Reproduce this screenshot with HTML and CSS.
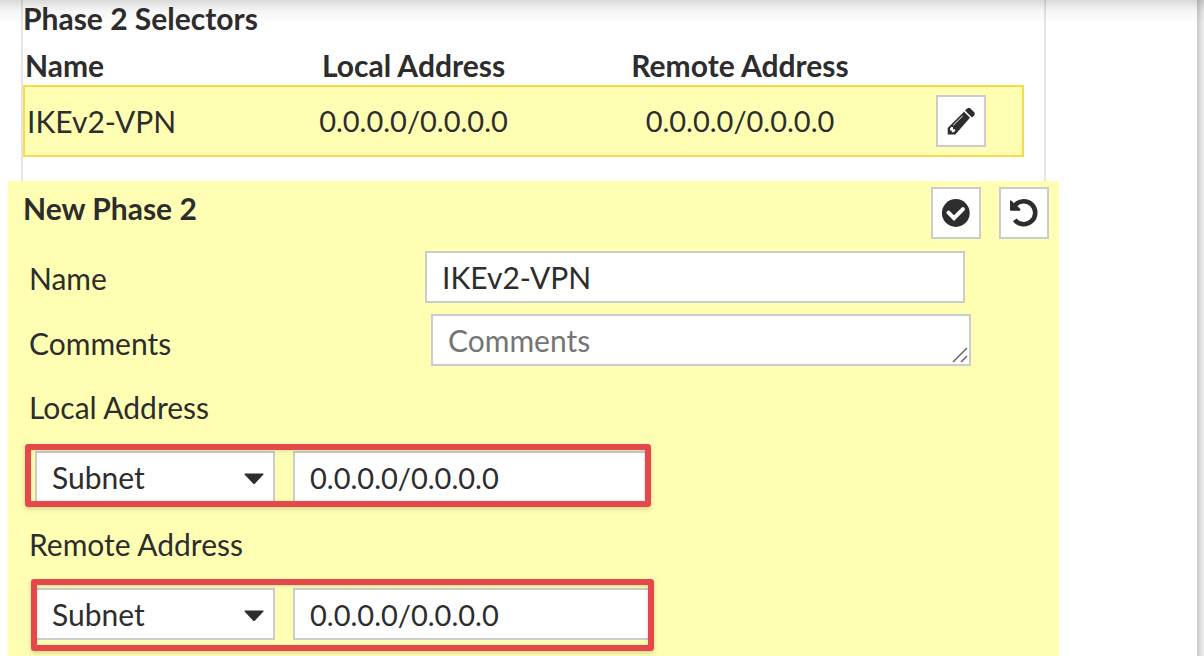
FILE: index.html
```html
<!DOCTYPE html>
<html lang="en">
<head>
<meta charset="utf-8">
<title>Phase 2 Selectors</title>
<link rel="stylesheet" href="styles.css">
</head>
<body>
<div class="page">
  <main class="content">
    <section class="selectors">
      <h2 class="title">Phase 2 Selectors</h2>
      <table class="selector-table">
        <colgroup><col class="col-name"><col class="col-local"><col><col class="col-action"></colgroup>
        <thead>
          <tr><th class="cell-name" scope="col">Name</th><th scope="col">Local Address</th><th scope="col">Remote Address</th><td></td></tr>
        </thead>
        <tbody>
          <tr class="selected">
            <td class="cell-name">IKEv2-VPN</td>
            <td class="ip">0.0.0.0/0.0.0.0</td>
            <td class="ip">0.0.0.0/0.0.0.0</td>
            <td>
              <button class="icon-button" type="button" aria-label="Edit">
                <svg class="icon" viewBox="0 0 28 28" aria-hidden="true">
                  <path fill="currentColor" d="M.7 21 17 4.700 23 10.700 8.300 27.500H.7z"/>
                  <path fill="currentColor" d="M18 3.600 20.500 1.200Q21.800.2 23.200 1.300L27.200 5.300Q28.400 6.700 27.300 8.200L24.900 10.500z"/>
                  <path fill="none" stroke="#fff" stroke-width="1" d="M6 18.500 15.600 9"/>
                  <path fill="#fff" d="M3 21.800 4.300 19.800 6 20.300V22.300H8L8.400 23.600 6.800 25.200H4.800V23.500H3z"/>
                </svg>
              </button>
            </td>
          </tr>
        </tbody>
      </table>
    </section>

    <form class="editor">
      <header class="editor-header">
        <h2 class="title editor-title">New Phase 2</h2>
        <button class="icon-button" type="button" aria-label="Save">
          <svg class="icon" viewBox="0 0 28 28" aria-hidden="true">
            <circle cx="13.800" cy="14" r="13.900" fill="currentColor"/>
            <path fill="none" stroke="#fff" stroke-width="4" stroke-linejoin="miter" stroke-linecap="round" d="M6.500 13.700 12 19.200 21 10.200"/>
          </svg>
        </button>
        <button class="icon-button" type="button" aria-label="Revert">
          <svg class="icon" viewBox="0 0 28 28" aria-hidden="true">
            <path fill="none" stroke="currentColor" stroke-width="4.600" d="M5.200 6A11.500 11.500 0 1 1 4.700 20.800"/>
            <path fill="currentColor" d="M0 2Q.5.900 1.500 1.700L4 4.200 7.500 7.300 10.300 10.100Q10.800 11.600 9.500 11.800H1Q0 11.800 0 10.800z"/>
          </svg>
        </button>
      </header>

      <div class="field">
        <label class="label" for="name">Name</label>
        <input class="control wide" id="name" type="text" value="IKEv2-VPN">
      </div>
      <div class="field field-comments">
        <label class="label" for="comments">Comments</label>
        <div class="textarea-wrap wide">
          <textarea class="control" id="comments" rows="1" placeholder="Comments"></textarea>
          <svg class="grip" viewBox="0 0 16 16" aria-hidden="true"><path fill="none" stroke="#666" stroke-width="1.500" d="M1 15 15 1M9 15 15 9"/></svg>
        </div>
      </div>

      <label class="label group-label" for="local-type">Local Address</label>
      <div class="address">
        <div class="select-wrap">
          <select class="control" id="local-type"><option>Subnet</option></select>
          <svg class="caret" viewBox="0 0 20 12" aria-hidden="true"><path fill="currentColor" d="M1 .5H19Q20 1 19 2L11 10.500Q10 11.500 9 10.500L1 2Q0 1 1 .5z"/></svg>
        </div>
        <input class="control subnet ip" type="text" value="0.0.0.0/0.0.0.0" aria-label="Local subnet">
        <span class="highlight highlight-local"></span>
      </div>

      <label class="label group-label" for="remote-type">Remote Address</label>
      <div class="address">
        <div class="select-wrap">
          <select class="control" id="remote-type"><option>Subnet</option></select>
          <svg class="caret" viewBox="0 0 20 12" aria-hidden="true"><path fill="currentColor" d="M1 .5H19Q20 1 19 2L11 10.500Q10 11.500 9 10.500L1 2Q0 1 1 .5z"/></svg>
        </div>
        <input class="control subnet ip" type="text" value="0.0.0.0/0.0.0.0" aria-label="Remote subnet">
        <span class="highlight highlight-remote"></span>
      </div>
    </form>
  </main>
  <div class="edge"></div>
  <div class="top-shadow"></div>
</div>
</body>
</html>
```
FILE: styles.css
```css
* {
  box-sizing: border-box;
}

body {
  margin: 0;
  background: #fff;
  color: #2d2d2d;
  font: 30px/36px Lato, "Open Sans", sans-serif;
}

.page {
  position: relative;
  display: flex;
  height: 100vh;
  overflow: hidden;
}

.content {
  flex: 1;
  display: flex;
  flex-direction: column;
  padding: 0 138px 0 8px;
}

.edge {
  width: 7px;
  background: linear-gradient(to right, #c8c8c8, #e2e2e2 60%, #ececec);
}

.top-shadow {
  position: absolute;
  top: 0;
  left: 0;
  right: 0;
  height: 24px;
  background: linear-gradient(rgba(0, 0, 0, 0.15), rgba(0, 0, 0, 0.11) 15%, rgba(0, 0, 0, 0.04) 45%, transparent);
  pointer-events: none;
}

.title {
  margin: 0;
  font-size: 30px;
  font-weight: 700;
}

.selectors {
  margin: 0 13px;
  padding: 0 20px 24px 0;
  border: solid #e5e5e5;
  border-width: 0 2px;
}

.selector-table {
  width: 100%;
  margin-top: 11px;
  border-spacing: 0;
  table-layout: fixed;
  text-align: center;
}

.col-name {
  width: 224px;
}

.col-local {
  width: 333px;
}

.col-action {
  width: 124px;
}

.selector-table th {
  padding: 0 0 2px;
}

.selector-table td {
  padding: 0;
}

.selector-table .cell-name {
  padding-left: 2px;
  text-align: left;
}

.selector-table .selected td {
  padding-top: 8px;
  padding-bottom: 8px;
  background: #ffffb3;
  border: solid #fada48;
  border-width: 2px 0;
}

.selector-table .selected td:first-child {
  border-left-width: 2px;
}

.selector-table .selected td:last-child {
  border-right-width: 2px;
}

.icon-button {
  display: inline-flex;
  align-items: center;
  justify-content: center;
  width: 50px;
  height: 52px;
  padding: 0;
  border: 2px solid #ccc;
  background: #fff;
  color: #2d2d2d;
  vertical-align: top;
}

.icon {
  width: 28px;
  height: 28px;
  overflow: visible;
}

.editor {
  flex: 1;
  padding: 6px 10px 0 15px;
  background: #ffffb3;
}

.editor-header {
  display: flex;
  gap: 18px;
  margin-bottom: 12px;
}

.editor-title {
  flex: 1;
  padding-top: 3px;
}

.field {
  display: flex;
  align-items: center;
  margin-bottom: 11px;
  padding-left: 6px;
}

.field .label {
  width: 396px;
  padding-top: 2px;
}

.field-comments {
  margin-bottom: 23px;
}

.field-comments .label {
  width: 402px;
  padding-top: 6px;
}

.group-label {
  display: block;
  padding-left: 6px;
}

.wide {
  flex: 0 1 540px;
  min-width: 0;
}

.control {
  display: block;
  width: 100%;
  height: 52px;
  margin: 0;
  padding: 6px 15px;
  border: 2px solid #ccc;
  border-radius: 0;
  background: #fff;
  color: #2d2d2d;
  font: inherit;
  appearance: none;
  resize: none;
  overflow: hidden;
}

.control::placeholder {
  color: #757575;
}

.ip {
  font-size: 29px;
}

.textarea-wrap,
.select-wrap {
  position: relative;
}

.grip {
  position: absolute;
  right: 3px;
  bottom: 3px;
  width: 16px;
  height: 16px;
}

.address {
  position: relative;
  display: flex;
  gap: 18px;
  margin: 26px 0 23px;
  padding-left: 12px;
}

.select-wrap {
  width: 240px;
}

.caret {
  position: absolute;
  top: 22px;
  right: 11px;
  width: 20px;
  height: 12px;
  pointer-events: none;
}

.subnet {
  width: 357px;
}

.highlight {
  position: absolute;
  border: 6px solid #e5484a;
  border-radius: 3px;
  box-shadow: 0 2px 5px rgba(0, 0, 0, 0.18), inset 0 1px 4px rgba(0, 0, 0, 0.15);
  pointer-events: none;
}

.highlight-local {
  top: -7px;
  left: 2px;
  width: 626px;
  height: 63px;
}

.highlight-remote {
  top: -9px;
  left: 8px;
  width: 623px;
  height: 72px;
}
```
